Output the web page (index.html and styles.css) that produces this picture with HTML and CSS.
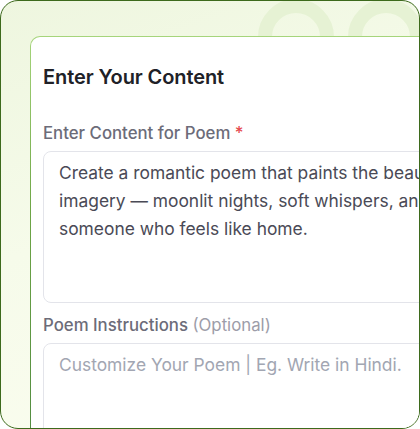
FILE: index.html
```html
<!DOCTYPE html>
<html>
<head>
<meta charset="utf-8">
<link rel="stylesheet" href="styles.css">
</head>
<body>
<div class="frame">
  <span class="ring ring-a"></span>
  <span class="ring ring-b"></span>
  <section class="card">
    <h2 class="title">Enter Your Content</h2>
    <div class="field">
      <label class="label">Enter Content for Poem <span class="req">*</span></label>
      <div class="box box-main">
        <span class="line">Create a romantic poem that paints the beauty of love through vivid</span>
        <span class="line">imagery — moonlit nights, soft whispers, and the quiet comfort of</span>
        <span class="line">someone who feels like home.</span>
      </div>
    </div>
    <div class="field">
      <label class="label">Poem Instructions <span class="opt">(Optional)</span></label>
      <div class="box box-second">
        <span class="line placeholder">Customize Your Poem | Eg. Write in Hindi.</span>
      </div>
    </div>
  </section>
</div>
</body>
</html>
```

FILE: styles.css
```css
* { box-sizing: border-box; }
html, body { margin: 0; padding: 0; background: #ffffff; }
body { font-family: Inter, "Noto Sans", sans-serif; }

.frame {
  position: relative;
  width: 420px;
  height: 429px;
  border: 1px solid #3d6a1c;
  border-radius: 18px;
  overflow: hidden;
  background: linear-gradient(160deg, #eef6df 0%, #f6fbea 45%, #fbfdf0 100%);
}

.ring {
  position: absolute;
  top: -2px;
  width: 76px;
  height: 76px;
  border-radius: 50%;
  border: 14px solid #e6f2d4;
}
.ring-a { left: 257px; }
.ring-b { left: 347px; }

.card {
  position: relative;
  margin: 35px 0 0 29px;
  width: 470px;
  height: 440px;
  border: 1px solid transparent;
  border-radius: 10px;
  background:
    linear-gradient(#ffffff, #ffffff) padding-box,
    linear-gradient(180deg, #a6d57b 0%, #6ea546 40%, #4e8840 100%) border-box;
  padding: 28px 12px 0 12px;
  display: flex;
  flex-direction: column;
}

.title {
  margin: 0 0 34px 0;
  font-size: 20px;
  line-height: 24px;
  font-weight: 600;
  letter-spacing: -0.1px;
  color: #202127;
}

.field {
  display: flex;
  flex-direction: column;
  gap: 8px;
  margin-bottom: 12px;
}

.label {
  font-size: 16.8px;
  line-height: 20px;
  font-weight: 500;
  color: #6c6c79;
}
.req { color: #e5484d; }
.opt { font-weight: 400; color: #9d9da9; }

.box {
  border: 1px solid #e3e4ea;
  border-radius: 8px;
  padding: 7px 15px;
  font-size: 17.4px;
  line-height: 28px;
  color: #4a4a56;
}
.box-main { height: 152px; }
.box-second { height: 160px; }

.line { display: block; white-space: nowrap; }
.placeholder { color: #a2a6b2; }
```
